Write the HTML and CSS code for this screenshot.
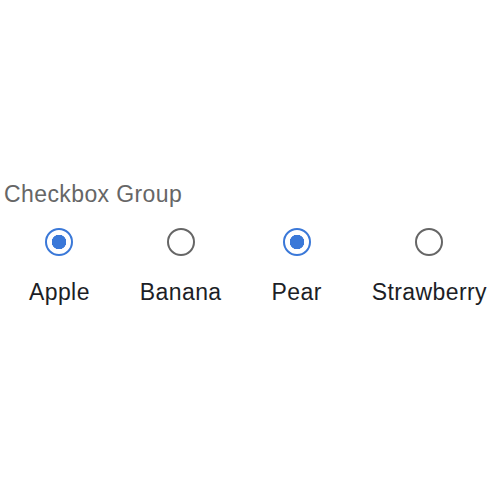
FILE: index.html
```html
<!DOCTYPE html>
<html>

<head>
    <meta charset="UTF-8">
    <title>Checkbox Group</title>
    <link rel="stylesheet" href="styles.css">
</head>

<body>
    <div class="group">
        <div class="group-title">Checkbox Group</div>
        <div class="options">
            <label class="option">
                <input type="checkbox" checked>
                <span>Apple</span>
            </label>
            <label class="option">
                <input type="checkbox">
                <span>Banana</span>
            </label>
            <label class="option">
                <input type="checkbox" checked>
                <span>Pear</span>
            </label>
            <label class="option">
                <input type="checkbox">
                <span>Strawberry</span>
            </label>
        </div>
    </div>
</body>

</html>
```

FILE: styles.css
```css
body {
    margin: 0;
    font-family: "Liberation Sans", Arial, sans-serif;
    background: #fff;
}

.group {
    padding: 180px 0 0 4px;
}

.group-title {
    font-size: 23px;
    letter-spacing: 0.4px;
    line-height: 28px;
    color: #666;
}

.options {
    display: flex;
    padding-top: 20px;
}

.option {
    display: flex;
    flex-direction: column;
    align-items: center;
    padding: 0 25px;
    font-size: 23px;
    letter-spacing: 0.4px;
    line-height: 28px;
    color: #1c1e26;
}

.option input {
    appearance: none;
    -webkit-appearance: none;
    width: 28px;
    height: 28px;
    margin: 0 0 22px;
    border: 2.5px solid #666;
    border-radius: 50%;
    background: #fff;
    box-sizing: border-box;
}

.option input:checked {
    border-color: #3a78d8;
    background: radial-gradient(circle, #3a78d8 0 7px, #fff 7.5px);
}
```
